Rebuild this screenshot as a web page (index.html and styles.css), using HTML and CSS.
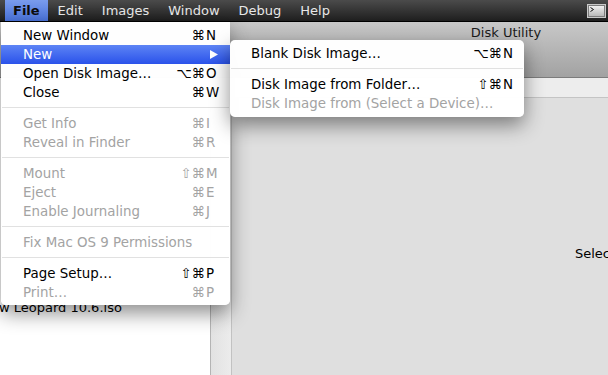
FILE: index.html
```html
<!DOCTYPE html>
<html lang="en">
<head>
    <meta charset="UTF-8">
    <meta name="viewport" content="width=device-width, initial-scale=1.0">
    <title>Disk Utility - File menu</title>
    <link rel="stylesheet" href="styles.css">
</head>
<body>
<div class="screen">
    <!-- System menu bar -->
    <div class="menubar">
        <span class="menu-title active">File</span>
        <span class="menu-title">Edit</span>
        <span class="menu-title">Images</span>
        <span class="menu-title">Window</span>
        <span class="menu-title">Debug</span>
        <span class="menu-title">Help</span>
        <span class="menubar-spacer"></span>
        <span class="terminal-icon">
            <svg width="19" height="14" viewBox="0 0 19 14">
                <defs>
                    <linearGradient id="termBg" x1="0" y1="0" x2="0" y2="1">
                        <stop offset="0" stop-color="#f2f2f2"/>
                        <stop offset="0.45" stop-color="#d6d6d6"/>
                        <stop offset="1" stop-color="#b9b9b9"/>
                    </linearGradient>
                </defs>
                <rect x="0.5" y="0.5" width="18" height="13" fill="#7d7d7d" stroke="#c9c9c9"/>
                <rect x="2" y="2" width="15" height="10" fill="url(#termBg)"/>
                <path d="M3.5 3.5 L6.5 5.5 L3.5 7.5" fill="none" stroke="#111" stroke-width="1"/>
            </svg>
        </span>
    </div>

    <!-- Disk Utility window behind the menu -->
    <div class="window">
        <div class="titlebar">
            <span class="title">Disk Utility</span>
        </div>
        <div class="window-body">
            <div class="sidebar">
                <ul class="source-list">
                    <li class="cut">w Leopard 10.6.iso</li>
                </ul>
            </div>
            <div class="splitter"></div>
            <div class="main">
                <div class="tabstrip"></div>
                <div class="detail">
                    <span class="hint">Select a disk, volume, or image.</span>
                </div>
            </div>
        </div>
    </div>

    <!-- File menu -->
    <div class="menu file-menu">
        <div class="item"><span class="label">New Window</span><span class="mods">⌘</span><span class="key">N</span></div>
        <div class="item selected"><span class="label">New</span>
            <svg class="arrow" width="8" height="9" viewBox="0 0 8 9"><path d="M0 0 L8 4.5 L0 9 Z" fill="#fff"/></svg>
        </div>
        <div class="item"><span class="label">Open Disk Image…</span><span class="mods">⌥⌘</span><span class="key">O</span></div>
        <div class="item"><span class="label">Close</span><span class="mods">⌘</span><span class="key">W</span></div>
        <div class="separator"></div>
        <div class="item disabled"><span class="label">Get Info</span><span class="mods">⌘</span><span class="key">I</span></div>
        <div class="item disabled"><span class="label">Reveal in Finder</span><span class="mods">⌘</span><span class="key">R</span></div>
        <div class="separator"></div>
        <div class="item disabled"><span class="label">Mount</span><span class="mods">⇧⌘</span><span class="key">M</span></div>
        <div class="item disabled"><span class="label">Eject</span><span class="mods">⌘</span><span class="key">E</span></div>
        <div class="item disabled"><span class="label">Enable Journaling</span><span class="mods">⌘</span><span class="key">J</span></div>
        <div class="separator"></div>
        <div class="item disabled"><span class="label">Fix Mac OS 9 Permissions</span></div>
        <div class="separator"></div>
        <div class="item"><span class="label">Page Setup…</span><span class="mods">⇧⌘</span><span class="key">P</span></div>
        <div class="item disabled"><span class="label">Print…</span><span class="mods">⌘</span><span class="key">P</span></div>
    </div>

    <!-- New submenu -->
    <div class="menu submenu">
        <div class="item"><span class="label">Blank Disk Image…</span><span class="mods">⌥⌘</span><span class="key">N</span></div>
        <div class="separator"></div>
        <div class="item"><span class="label">Disk Image from Folder…</span><span class="mods">⇧⌘</span><span class="key">N</span></div>
        <div class="item disabled"><span class="label">Disk Image from (Select a Device)…</span></div>
    </div>
</div>
</body>
</html>
```

FILE: styles.css
```css
/* Whole screen crop */
body {
    margin: 0;
    background: #dfdfdf;
    font-family: "DejaVu Sans", "Liberation Sans", sans-serif;
    font-size: 13px;
    color: #000;
}

.screen {
    position: relative;
    width: 608px;
    height: 375px;
    overflow: hidden;
}

/* Menu bar */
.menubar {
    display: flex;
    align-items: stretch;
    height: 21px;
    padding-left: 5px;
    background: linear-gradient(#4b4b4b, #1e1e1e);
    border-bottom: 1px solid #000;
}

.menu-title {
    padding: 0 9px;
    line-height: 21px;
    color: #e8e8e8;
}

.menu-title.active {
    padding: 0 8px;
    background: linear-gradient(#7a9cec, #4a73da);
    color: #0c0c0c;
    font-weight: bold;
}

.menu-title + .menu-title {
    margin-left: 1px;
}

.menubar-spacer {
    flex: 1;
}

.terminal-icon {
    display: flex;
    align-items: center;
    padding-right: 2px;
}

/* Window behind */
.window {
    display: flex;
    flex-direction: column;
    width: 1012px;
    height: 353px;
}

.titlebar {
    height: 55px;
    background: linear-gradient(#c8c8c8, #a2a2a2);
    border-bottom: 1px solid #7c7c7c;
    text-align: center;
}

.titlebar .title {
    line-height: 22px;
    color: #1a1a1a;
}

.window-body {
    flex: 1;
    display: flex;
}

.sidebar {
    width: 210px;
    background: #fff;
    border-right: 1px solid #b4b4b4;
}

.source-list {
    list-style: none;
    margin: 0;
    padding: 220px 0 0 0;
}

.source-list li {
    height: 19px;
    line-height: 19px;
    padding-left: 24px;
    white-space: nowrap;
}

.source-list li.cut {
    padding-left: 0;
    margin-left: -1px;
}

.splitter {
    width: 20px;
    background: linear-gradient(90deg, #e2e2e2, #ececec);
    border-right: 1px solid #c2c2c2;
}

.main {
    flex: 1;
    display: flex;
    flex-direction: column;
    background: #dfdfdf;
}

.tabstrip {
    height: 19px;
    background: #ededed;
    border-bottom: 1px solid #c4c4c4;
}

.detail {
    padding: 148px 0 0 343px;
}

.hint {
    white-space: nowrap;
}

/* Pull-down menus */
.menu {
    position: absolute;
    background: rgba(255, 255, 255, 0.985);
    padding: 4px 0;
    font-size: 13.4px;
    box-shadow: 0 8px 20px rgba(0, 0, 0, 0.45);
}

.file-menu {
    left: 1px;
    top: 22px;
    width: 229px;
    padding-bottom: 3px;
    border-radius: 0 0 5px 5px;
}

.submenu {
    left: 230px;
    top: 40px;
    width: 294px;
    border-radius: 5px;
}

.item {
    display: flex;
    align-items: center;
    height: 19px;
    line-height: 19px;
    padding: 0 11px 0 22px;
    white-space: nowrap;
}

.submenu .item {
    padding: 0 8px 0 21px;
}

.item .label {
    flex: 1;
}

.item .mods {
    text-align: right;
}

.item .key {
    width: 13px;
    padding-left: 1px;
}

.item.disabled {
    color: #a3a3a3;
}

.item.selected {
    background: linear-gradient(#5d84f5, #2a52ea);
    color: #fff;
}

.item .arrow {
    margin-right: 1px;
}

.separator {
    position: relative;
    height: 12px;
}

.separator::after {
    content: "";
    position: absolute;
    left: 1px;
    right: 1px;
    top: 5px;
    border-top: 1px solid #e1e1e1;
}
```
